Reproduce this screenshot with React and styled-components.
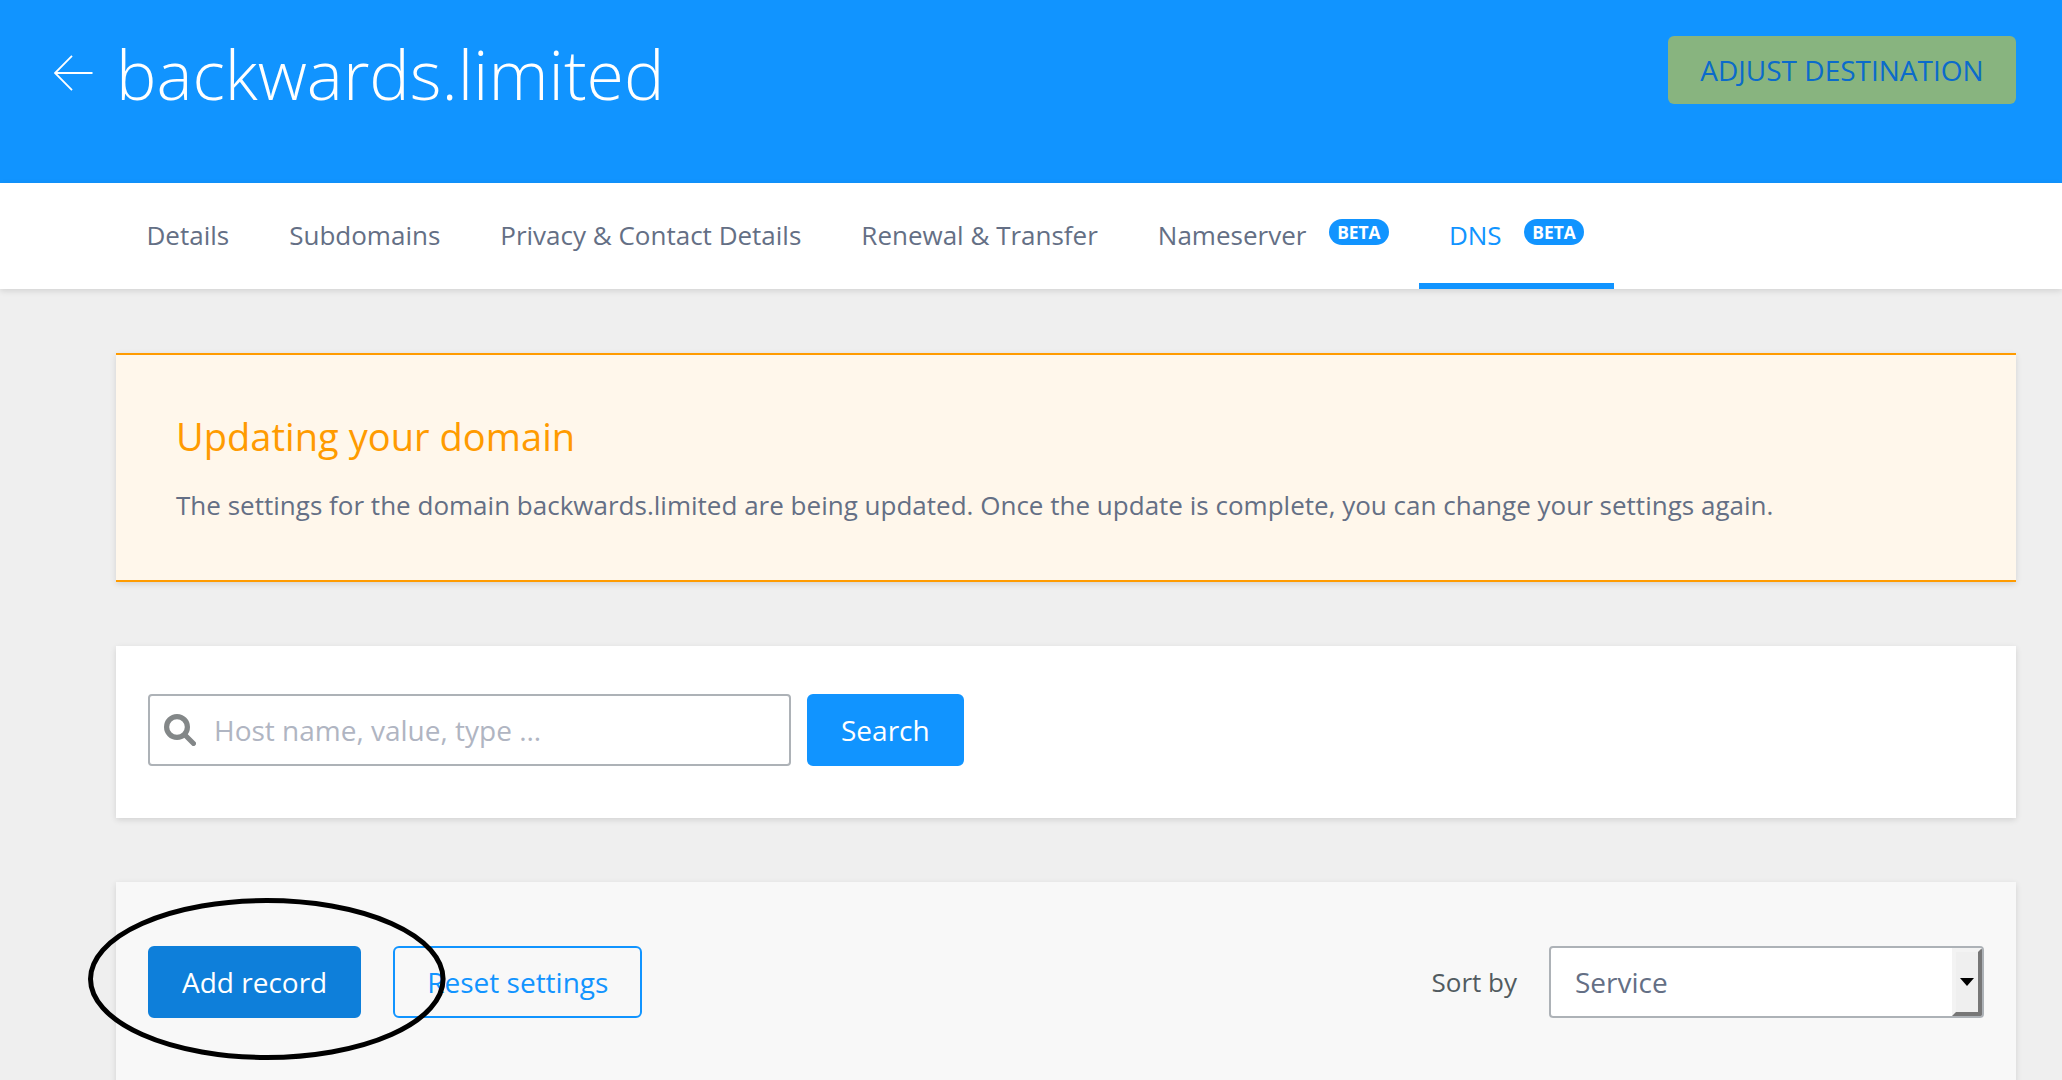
import React from "react";
import styled, { createGlobalStyle, css } from "styled-components";

const BLUE = "#1194ff";
const SLATE = "#646f85";
const FONT = '"Open Sans", "Noto Sans", sans-serif';

const GlobalStyle = createGlobalStyle`
  *, *::before, *::after { box-sizing: border-box; }
  body { margin: 0; background: #efefef; font-family: ${FONT}; color: ${SLATE}; }
  button, input { font-family: inherit; margin: 0; }
`;

const Page = styled.div`
  position: relative;
  height: 1080px;
  overflow: hidden;
  background: #efefef;
`;

const Header = styled.header`
  display: flex;
  align-items: flex-start;
  height: 183px;
  padding: 36px 46px 0 54px;
  background: ${BLUE};
`;

const BackArrow = styled.svg`
  flex: none;
  width: 39px;
  height: 36px;
  margin-top: 19px;
  fill: none;
  stroke: #fff;
  stroke-width: 1.8;
`;

const Title = styled.h1`
  flex: 1;
  margin: 0 0 0 23px;
  font-size: 68px;
  line-height: 76px;
  font-weight: 300;
  color: #fff;
`;

const Button = styled.button`
  display: inline-flex;
  align-items: center;
  justify-content: center;
  height: 72px;
  padding: 0 32px;
  border: 2px solid ${BLUE};
  border-radius: 6px;
  background: ${BLUE};
  color: #fff;
  font-size: 28px;
  line-height: 38px;
  white-space: nowrap;
  ${(p) =>
    p.$variant === "outline" &&
    css`
      background: transparent;
      color: ${BLUE};
    `}
  ${(p) =>
    p.$variant === "active" &&
    css`
      background: #0e7fda;
      border-color: #0e7fda;
    `}
  ${(p) =>
    p.$variant === "green" &&
    css`
      width: 348px;
      height: 68px;
      border: 0;
      background: #88b47f;
      color: #0b6bcb;
    `}
`;

const Tabs = styled.nav`
  display: flex;
  height: 106px;
  padding-left: 116.5px;
  background: #fff;
  box-shadow: 0 2px 6px rgba(0, 0, 0, 0.12);
`;

const Tab = styled.a`
  display: flex;
  align-items: flex-start;
  padding: 34px 30px 0;
  font-size: 26px;
  line-height: 36px;
  white-space: nowrap;
  color: ${(p) => (p.$active ? BLUE : SLATE)};
  box-shadow: ${(p) => (p.$active ? `inset 0 -6px 0 ${BLUE}` : "none")};
`;

const Badge = styled.span`
  width: 60px;
  height: 26px;
  margin: 2px 0 0 22.5px;
  border-radius: 13px;
  background: ${BLUE};
  color: #fff;
  font-size: 17.4px;
  line-height: 26px;
  font-weight: 700;
  text-align: center;
`;

const Content = styled.main`
  display: flex;
  flex-direction: column;
  gap: 64px;
  padding: 64px 46px 0 116px;
`;

const Card = styled.section`
  background: #fff;
  box-shadow: 0 2px 6px rgba(0, 0, 0, 0.12);
`;

const Alert = styled(Card)`
  height: 229px;
  padding: 56px 60px 0;
  border: solid #ff9b00;
  border-width: 2px 0;
  background: #fff7eb;
`;

const AlertTitle = styled.h2`
  margin: 0;
  font-size: 38px;
  line-height: 50px;
  font-weight: 400;
  letter-spacing: 0.05px;
  color: #ff9b00;
`;

const AlertText = styled.p`
  margin: 26px 0 0;
  font-size: 26px;
  line-height: 36px;
  letter-spacing: 0.01px;
`;

const SearchCard = styled(Card)`
  display: flex;
  gap: 16px;
  height: 172px;
  padding: 48px 32px;
`;

const SearchField = styled.label`
  display: flex;
  align-items: center;
  width: 643px;
  height: 72px;
  padding-left: 14px;
  border: 2px solid #adb2b7;
  border-radius: 4px;
`;

const SearchIcon = styled.svg`
  flex: none;
  width: 32px;
  height: 32px;
  fill: none;
  stroke: #838788;
  stroke-linecap: round;
`;

const SearchInput = styled.input`
  flex: 1;
  min-width: 0;
  height: 60px;
  padding: 0 0 0 18px;
  border: 0;
  outline: 0;
  background: transparent;
  font-size: 28px;
  color: ${SLATE};
  &::placeholder {
    color: #b0b5c2;
    opacity: 1;
  }
`;

const RecordsCard = styled(Card)`
  display: flex;
  align-items: flex-start;
  height: 320px;
  padding: 64px 32px;
  background: #f8f8f8;
`;

const Actions = styled.div`
  display: flex;
  flex: 1;
  gap: 32px;
`;

const SortLabel = styled.span`
  margin-right: 32px;
  font-size: 26px;
  line-height: 72px;
  color: #515b60;
`;

const Select = styled.div`
  display: flex;
  align-items: stretch;
  width: 435px;
  height: 72px;
  border: 2px solid #adb2b7;
  border-radius: 4px;
  background: #fff;
  overflow: hidden;
`;

const SelectValue = styled.span`
  flex: 1;
  padding-left: 24px;
  font-size: 28px;
  line-height: 68px;
`;

const SelectHandle = styled.span`
  display: flex;
  align-items: center;
  justify-content: center;
  width: 30px;
  border: 4px solid;
  border-color: #f3f3f3 #777 #777 #f3f3f3;
  background: #efefef;
  &::before {
    content: "";
    border: solid transparent;
    border-width: 8px 7px 0;
    border-top-color: #000;
  }
`;

const Highlight = styled.svg`
  position: absolute;
  left: 86px;
  top: 896px;
  width: 362px;
  height: 166px;
  fill: none;
  stroke: #000;
  stroke-width: 5;
  pointer-events: none;
`;

const TABS = [
  { label: "Details" },
  { label: "Subdomains" },
  { label: "Privacy & Contact Details" },
  { label: "Renewal & Transfer" },
  { label: "Nameserver", beta: true },
  { label: "DNS", beta: true, active: true },
];

export default function App() {
  return (
    <Page>
      <GlobalStyle />
      <Header>
        <BackArrow viewBox="0 0 39 36">
          <path d="M38.5 18H1M18 .8L1 18l17 17.2" />
        </BackArrow>
        <Title>backwards.limited</Title>
        <Button $variant="green">ADJUST DESTINATION</Button>
      </Header>
      <Tabs>
        {TABS.map((tab) => (
          <Tab key={tab.label} $active={tab.active}>
            {tab.label}
            {tab.beta && <Badge>BETA</Badge>}
          </Tab>
        ))}
      </Tabs>
      <Content>
        <Alert>
          <AlertTitle>Updating your domain</AlertTitle>
          <AlertText>
            The settings for the domain backwards.limited are being updated. Once the update is
            complete, you can change your settings again.
          </AlertText>
        </Alert>
        <SearchCard>
          <SearchField>
            <SearchIcon viewBox="0 0 32 32">
              <circle cx="13" cy="13" r="10.4" strokeWidth="5.2" />
              <path d="M21 21l8.5 8.5" strokeWidth="5" />
            </SearchIcon>
            <SearchInput placeholder="Host name, value, type ..." />
          </SearchField>
          <Button>Search</Button>
        </SearchCard>
        <RecordsCard>
          <Actions>
            <Button $variant="active">Add record</Button>
            <Button $variant="outline">Reset settings</Button>
          </Actions>
          <SortLabel>Sort by</SortLabel>
          <Select>
            <SelectValue>Service</SelectValue>
            <SelectHandle />
          </Select>
        </RecordsCard>
      </Content>
      <Highlight viewBox="0 0 362 166">
        <ellipse cx="180.8" cy="83" rx="176.3" ry="78.5" />
      </Highlight>
    </Page>
  );
}
